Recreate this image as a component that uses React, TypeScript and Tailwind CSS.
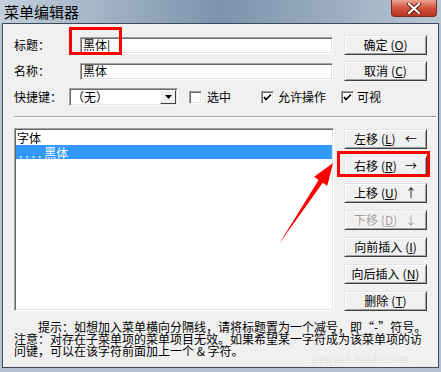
const btn =
  "flex items-center h-[20px] w-[83px] bg-[#f0f0f0] border border-t-[#e3e3e3] border-l-[#e3e3e3] border-r-[#404040] border-b-[#404040] shadow-[inset_1px_1px_0_#ffffff,inset_-1px_-1px_0_#a0a0a0] text-[12px] leading-none";

const sunken =
  "bg-white border border-t-[#a0a0a0] border-l-[#a0a0a0] border-r-white border-b-white shadow-[inset_1px_1px_0_#696969,inset_-1px_-1px_0_#e3e3e3]";

function Key({ k }: { k: string }) {
  return (
    <span className="ml-[3px]">
      (<span className="underline">{k}</span>)
    </span>
  );
}

function Check({ checked }: { checked?: boolean }) {
  return (
    <div className={`${sunken} w-[13px] h-[13px] flex items-center justify-center`}>
      {checked && (
        <svg width="9" height="9" viewBox="0 0 9 9">
          <path d="M1 4 L3 6.5 L8 1.5" stroke="#000" strokeWidth="1.6" fill="none" />
        </svg>
      )}
    </div>
  );
}

function Field({ value }: { value: string }) {
  return (
    <div className={`${sunken} w-[253px] h-[17px] flex items-center pl-[2px]`}>
      {value}
    </div>
  );
}

export default function App() {
  return (
    <div className="relative w-[441px] h-[372px] overflow-hidden bg-[#b3c2d1] flex flex-col font-['SimSun','Noto_Sans_CJK_SC',sans-serif] text-[12px] leading-[14px] text-black">
      {/* title bar */}
      <div className="h-[23px] flex items-start bg-gradient-to-r from-[#c3d0dc] via-[#7b93ab] to-[#b9c7d5]">
        <div className="pl-[4px] pt-[3px] text-[15px] leading-[17px] text-black">菜单编辑器</div>
        <div className="ml-auto mr-[4px] w-[46px] h-[17px] rounded-b-[4px] border border-t-0 border-[#7a2a1e] bg-gradient-to-b from-[#e8a392] via-[#d0533e] to-[#b8341f] flex items-center justify-center">
          <svg width="14" height="11" viewBox="0 0 14 11">
            <path d="M2 1 L12 10 M12 1 L2 10" stroke="#5a1a10" strokeWidth="4" strokeLinecap="round" />
            <path d="M2 1 L12 10 M12 1 L2 10" stroke="#ffffff" strokeWidth="2.2" strokeLinecap="round" />
          </svg>
        </div>
      </div>

      {/* client */}
      <div className="mx-[2px] mb-[4px] flex-1 border border-[#3f4a58] bg-[#f0f0f0] flex flex-col pl-[11px] pr-[11px] pt-[11px]">
        <div className="flex items-center h-[20px]">
          <div className="w-[66px]">标题：</div>
          <Field value="黑体|" />
          <div className={`${btn} ml-[11px] justify-center text-black`}>
            确定<Key k="O" />
          </div>
        </div>
        <div className="flex items-center h-[20px] mt-[6px]">
          <div className="w-[66px]">名称：</div>
          <Field value="黑体" />
          <div className={`${btn} ml-[11px] justify-center text-black`}>
            取消<Key k="C" />
          </div>
        </div>
        <div className="flex items-center h-[18px] mt-[7px]">
          <div className="w-[55px]">快捷键：</div>
          <div className={`${sunken} w-[109px] h-[18px] flex items-center`}>
            <span className="flex-1 pl-[2px]">（无）</span>
            <div className="w-[16px] h-[14px] mr-[1px] bg-[#f0f0f0] border border-t-white border-l-white border-r-[#404040] border-b-[#404040] flex items-center justify-center">
              <svg width="7" height="4" viewBox="0 0 7 4">
                <path d="M0 0 H7 L3.5 4 Z" fill="#000" />
              </svg>
            </div>
          </div>
          <div className="ml-[11px]">
            <Check />
          </div>
          <span className="ml-[5px]">选中</span>
          <div className="ml-[30px]">
            <Check checked />
          </div>
          <span className="ml-[4px]">允许操作</span>
          <div className="ml-[15px]">
            <Check checked />
          </div>
          <span className="ml-[3px]">可视</span>
        </div>

        <div className="mt-[10px] -mr-[9px] h-[2px] border-t border-t-[#a0a0a0] border-b border-b-white" />

        <div className="flex mt-[10px]">
          <div className={`${sunken} w-[320px] h-[183px] pt-[1px] pl-[1px] leading-[13px]`}>
            <div className="h-[15px] pl-[1px] flex items-center">字体</div>
            <div className="h-[14px] pl-[3px] mr-[1px] bg-[#3399ff] text-white flex items-center">
              <span className="tracking-[3px]">....</span>黑体
            </div>
          </div>
          <div className="ml-[10px] mt-[1px] flex flex-col gap-[7px]">
            <div className={`${btn} justify-between px-[9px] text-black`}>
              <span>左移<Key k="L" /></span>
              <span>←</span>
            </div>
            <div className={`${btn} justify-between px-[9px] text-black border-[#202020]`}>
              <span>右移<Key k="R" /></span>
              <span>→</span>
            </div>
            <div className={`${btn} justify-between px-[9px] text-black`}>
              <span>上移<Key k="U" /></span>
              <span>↑</span>
            </div>
            <div className={`${btn} justify-between px-[9px] text-[#a0a0a0] [text-shadow:1px_1px_0_#ffffff]`}>
              <span>下移<Key k="D" /></span>
              <span>↓</span>
            </div>
            <div className={`${btn} justify-center text-black`}>
              向前插入<Key k="I" />
            </div>
            <div className={`${btn} justify-center text-black`}>
              向后插入<Key k="N" />
            </div>
            <div className={`${btn} justify-center text-black`}>
              删除<Key k="T" />
            </div>
          </div>
        </div>

        <div className="mt-[10px] -mr-[10px] text-[12px] leading-[12px] whitespace-nowrap">
          <div className="pl-[24px]">提示：如想加入菜单横向分隔线，请将标题置为一个减号，即“-”符号。</div>
          <div>注意：对存在子菜单项的菜单项目无效。如果希望某一字符成为该菜单项的访</div>
          <div>问键，可以在该字符前面加上一个 &amp; 字符。</div>
        </div>
      </div>

      {/* watermark */}
      <div className="absolute left-[312px] top-[352px] text-[13px] leading-[14px] text-[#e2e2e2] font-['Liberation_Serif',serif]">
        jingyan.baidu.com
      </div>

      {/* annotations */}
      <div className="absolute left-[69px] top-[27px] w-[53px] h-[28px] border-[3px] border-[#ff0000]" />
      <div className="absolute left-[337px] top-[151px] w-[93px] h-[26px] border-[3px] border-[#ff0000]" />
      <svg className="absolute left-0 top-0" width="441" height="372" viewBox="0 0 441 372">
        <polygon
          points="279,244 318.6,179.9 314.1,176.8 333,163 327.3,185.8 322.8,182.7"
          fill="#ff0000"
        />
      </svg>
    </div>
  );
}
